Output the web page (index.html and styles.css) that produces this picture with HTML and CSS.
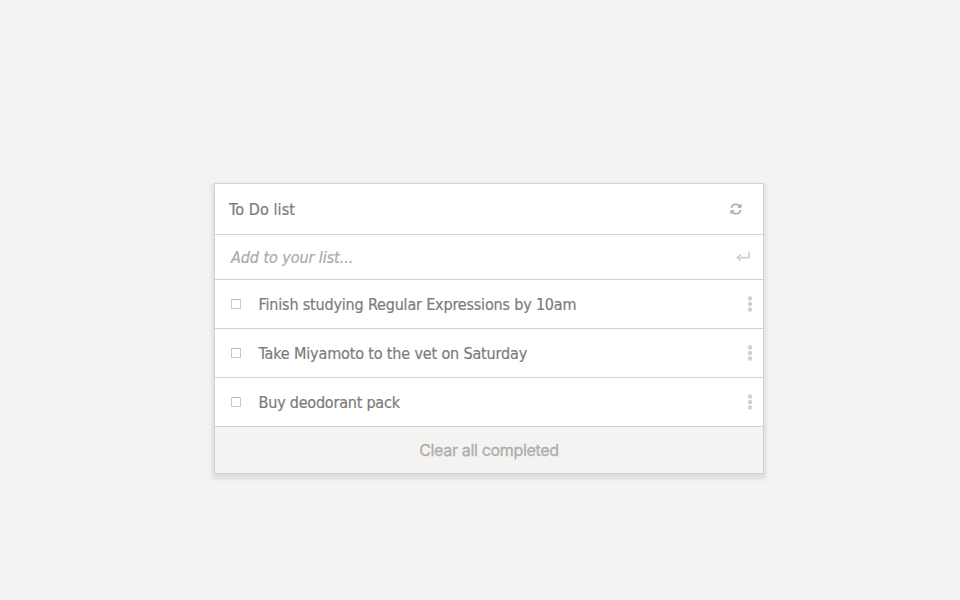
FILE: index.html
```html
<!DOCTYPE html>
<html lang="en">
<head>
<meta charset="utf-8">
<title>To Do list</title>
<link rel="stylesheet" href="styles.css">
</head>
<body>
<main class="todo">
  <header class="row header">
    <h1 class="title">To Do list</h1>
    <svg class="sync" width="12" height="12" viewBox="0 0 12 12"><path class="arc" d="M1.3 4.9C1.9 2.6 3.6 1.2 6 1.2C7.6 1.2 8.9 1.9 9.9 3.1M10.7 7.1C10.1 9.4 8.4 10.8 6 10.8C4.4 10.8 3.1 10.1 2.1 8.9"/><path class="head" d="M11.5 .6V4.8H7.3ZM.5 11.4V7.2H4.7Z"/></svg>
  </header>
  <div class="row add">
    <span class="placeholder">Add to your list...</span>
    <svg class="enter" width="14" height="10" viewBox="0 0 14 10"><path d="M13 0V4.8Q13 5.6 12.2 5.6H1.5M4.6 2.4L1.4 5.6L4.6 8.8"/></svg>
  </div>
  <ul class="list">
    <li class="row item">
      <span class="box"></span><span class="text finish">Finish studying Regular Expressions by 10am</span>
      <svg class="dots" width="6" height="16" viewBox="0 0 6 16"><circle cx="3" cy="2.5" r="2.2"/><circle cx="3" cy="8" r="2.2"/><circle cx="3" cy="13.5" r="2.2"/></svg>
    </li>
    <li class="row item">
      <span class="box"></span><span class="text take">Take Miyamoto to the vet on Saturday</span>
      <svg class="dots" width="6" height="16" viewBox="0 0 6 16"><circle cx="3" cy="2.5" r="2.2"/><circle cx="3" cy="8" r="2.2"/><circle cx="3" cy="13.5" r="2.2"/></svg>
    </li>
    <li class="row item">
      <span class="box"></span><span class="text buy">Buy deodorant pack</span>
      <svg class="dots" width="6" height="16" viewBox="0 0 6 16"><circle cx="3" cy="2.5" r="2.2"/><circle cx="3" cy="8" r="2.2"/><circle cx="3" cy="13.5" r="2.2"/></svg>
    </li>
  </ul>
  <footer class="footer"><span class="clear">Clear all completed</span></footer>
</main>
</body>
</html>
```
FILE: styles.css
```css
* {
  box-sizing: border-box;
}

body {
  min-height: 100vh;
  margin: 0;
  padding: 183px 0 0 214px;
  background: #f4f3f1;
  color: #7b7b7b;
  font-family: "DejaVu Sans Condensed", "DejaVu Sans", sans-serif;
  font-stretch: condensed;
  font-size: 16px;
}

.todo {
  width: 550px;
  border: 1px solid #d1d1d0;
  background: #fff;
  box-shadow: 0 3px 4px 2px rgba(0, 0, 0, 0.09);
}

.row {
  display: flex;
  align-items: center;
  border-bottom: 1px solid #d1d1d1;
  white-space: nowrap;
}

.header {
  height: 51px;
  padding: 0 21px 0 14px;
  justify-content: space-between;
}

.title {
  margin: 0;
  font-size: 16px;
  font-weight: 400;
  letter-spacing: 0.1px;
  -webkit-text-stroke: 0.2px;
}

.arc {
  fill: none;
  stroke: #a8a8a8;
  stroke-width: 1.6;
}

.head {
  fill: #a8a8a8;
}

.add {
  height: 45px;
  padding: 0 13px 0 16px;
  justify-content: space-between;
}

.placeholder {
  color: #a9a9a9;
  font-style: italic;
  letter-spacing: -0.07px;
  -webkit-text-stroke: 0.2px;
}

.enter {
  fill: none;
  stroke: #cecece;
  stroke-width: 1.6;
}

.list {
  margin: 0;
  padding: 0;
  list-style: none;
}

.item {
  height: 49px;
  padding: 0 10px 0 16px;
}

.box {
  width: 10px;
  height: 10px;
  margin-right: 17.6px;
  border: 1px solid #cacaca;
  border-top-color: #b8b8b8;
}

.text {
  letter-spacing: -0.18px;
  -webkit-text-stroke: 0.2px;
}

.take {
  letter-spacing: -0.15px;
}

.buy {
  letter-spacing: -0.22px;
}

.dots {
  margin-left: auto;
  fill: #d1d1d1;
}

.footer {
  display: flex;
  height: 46px;
  align-items: center;
  justify-content: center;
  background: #f4f3f1;
}

.clear {
  color: #adadad;
  font-family: Inter, sans-serif;
  font-size: 16px;
  letter-spacing: -0.32px;
  -webkit-text-stroke: 0.3px;
}
```
